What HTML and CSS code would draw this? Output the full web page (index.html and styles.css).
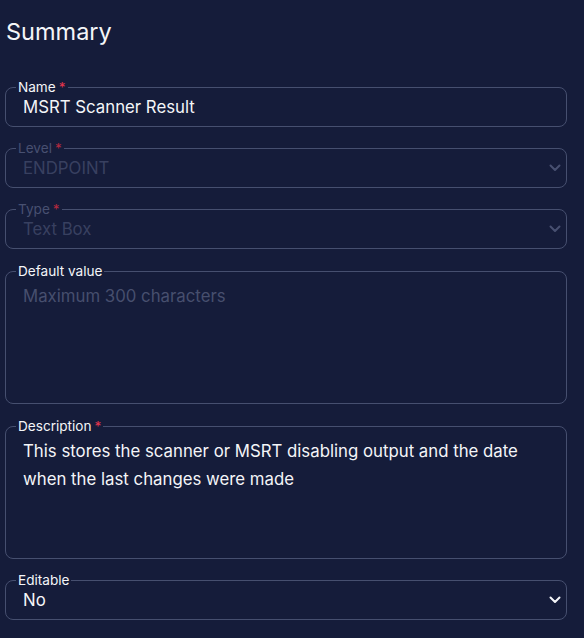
FILE: index.html
```html
<!DOCTYPE html>
<html lang="en">

<head>
 <meta charset="UTF-8">
 <meta name="viewport" content="width=device-width">
 <title>Summary</title>
 <link rel="stylesheet" href="styles.css">
</head>

<body>

 <form class="summary">

  <h2 class="summary-title">Summary</h2>

  <fieldset class="field">
   <legend class="field-label">Name<span class="req">*</span></legend>
   <input class="field-input" name="name" value="MSRT Scanner Result">
  </fieldset>

  <fieldset class="field field-select" disabled>
   <legend class="field-label">Level<span class="req">*</span></legend>
   <div class="select-row">
    <select class="field-input" name="level">
     <option>ENDPOINT</option>
    </select>
    <svg class="chevron" width="12" height="8" viewBox="0 0 12 8"><path d="M1.5 1.5 6 6l4.5-4.5" fill="none" stroke="currentColor" stroke-width="2" stroke-linecap="round" stroke-linejoin="round"/></svg>
   </div>
  </fieldset>

  <fieldset class="field field-select" disabled>
   <legend class="field-label">Type<span class="req">*</span></legend>
   <div class="select-row">
    <select class="field-input" name="type">
     <option>Text Box</option>
    </select>
    <svg class="chevron" width="12" height="8" viewBox="0 0 12 8"><path d="M1.5 1.5 6 6l4.5-4.5" fill="none" stroke="currentColor" stroke-width="2" stroke-linecap="round" stroke-linejoin="round"/></svg>
   </div>
  </fieldset>

  <fieldset class="field field-area">
   <legend class="field-label">Default value</legend>
   <textarea class="field-input" name="default" placeholder="Maximum 300 characters"></textarea>
  </fieldset>

  <fieldset class="field field-area">
   <legend class="field-label">Description<span class="req">*</span></legend>
   <textarea class="field-input" name="description">This stores the scanner or MSRT disabling output and the date when the last changes were made</textarea>
  </fieldset>

  <fieldset class="field field-select">
   <legend class="field-label">Editable</legend>
   <div class="select-row">
    <select class="field-input" name="editable">
     <option>No</option>
     <option>Yes</option>
    </select>
    <svg class="chevron" width="12" height="8" viewBox="0 0 12 8"><path d="M1.5 1.5 6 6l4.5-4.5" fill="none" stroke="currentColor" stroke-width="2" stroke-linecap="round" stroke-linejoin="round"/></svg>
   </div>
  </fieldset>

 </form>

</body>
</html>
```

FILE: styles.css
```css
body {
  margin: 0;
  background-color: #151c3a;
  font-family: Inter, 'Noto Sans', sans-serif;
  color: #f4f5f8;
}
.summary {
  width: 562px;
  padding: 0 0 0 5px;
}
.summary-title {
  margin: 18px 0 34px 1px;
  font-size: 23.5px;
  line-height: 28px;
  font-weight: 400;
}
.field {
  margin: 0 0 14px;
  padding: 0 16px 0 17px;
  border: 1px solid #464f6f;
  border-radius: 8px;
  min-width: 0;
}
.field-label {
  margin-left: -7px;
  padding: 0 2px;
  font-size: 13.6px;
  line-height: 15px;
  color: #f4f5f8;
}
.req {
  margin-left: 3px;
  color: #e3344d;
}
.field-input {
  display: block;
  box-sizing: border-box;
  width: 100%;
  height: 31px;
  margin: 0;
  padding: 2px 0 9px;
  border: none;
  outline: none;
  background: transparent;
  font-family: inherit;
  font-size: 16.8px;
  line-height: 20px;
  color: #f4f5f8;
}
.field-select {
  padding-right: 5px;
}
.select-row {
  display: flex;
  align-items: flex-start;
}
select.field-input {
  -webkit-appearance: none;
  appearance: none;
  flex: 1;
}
.chevron {
  flex: none;
  margin-top: 8px;
  color: #f4f5f8;
}
.field-area {
  margin: 15px 0 14px;
}
textarea.field-input {
  height: 124px;
  padding: 3px 30px 0 0;
  line-height: 28px;
  resize: none;
}
textarea.field-input::placeholder {
  color: #474f6e;
}
.field[disabled] .field-label,
.field[disabled] .field-input,
.field[disabled] .chevron {
  color: #485071;
}
.field[disabled] .req {
  color: #b3293f;
}
```
